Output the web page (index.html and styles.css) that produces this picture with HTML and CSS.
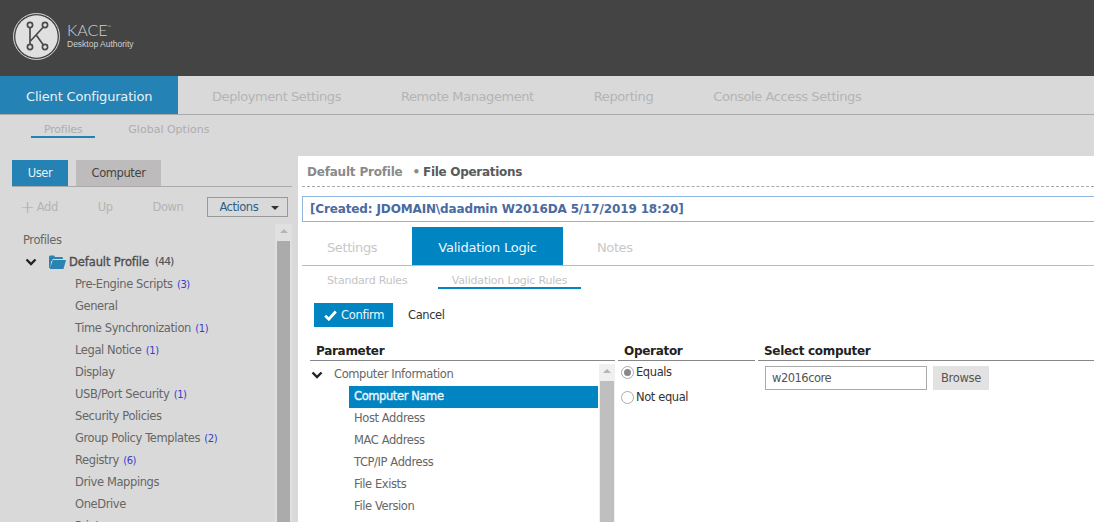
FILE: index.html
```html
<!DOCTYPE html>
<html lang="en">
<head>
<meta charset="utf-8">
<title>KACE Desktop Authority</title>
<link rel="stylesheet" href="styles.css">
</head>
<body>
<header class="masthead">
  <svg class="logo" width="48" height="48" viewBox="0 0 48 48">
    <circle cx="23.500" cy="23.500" r="23" fill="none" stroke="#d8d8d8" stroke-width="1"/>
    <circle cx="23.500" cy="23.500" r="21.200" fill="#e0e0e0"/>
    <g fill="none" stroke="#4a4a4a" stroke-width="1.700">
      <path d="M17 14.500v17M30.400 14 17 28.500M23 21.800 30.400 32"/>
      <circle cx="17" cy="12" r="2.600"/>
      <circle cx="32" cy="12" r="2.600"/>
      <circle cx="17" cy="34" r="2.600"/>
      <circle cx="32" cy="34" r="2.600"/>
    </g>
  </svg>
  <div class="brand">
    <div class="brand-name">KACE<sup class="tm">™</sup></div>
    <div class="brand-sub">Desktop Authority</div>
  </div>
</header>

<nav class="mainnav">
  <a class="mainnav-item is-active">Client Configuration</a>
  <a class="mainnav-item">Deployment Settings</a>
  <a class="mainnav-item">Remote Management</a>
  <a class="mainnav-item">Reporting</a>
  <a class="mainnav-item">Console Access Settings</a>
</nav>

<nav class="subnav">
  <a class="subnav-item is-active">Profiles</a>
  <a class="subnav-item">Global Options</a>
</nav>

<div class="workspace">
  <aside class="sidebar">
    <div class="scope-tabs">
      <a class="scope-tab is-active">User</a>
      <a class="scope-tab">Computer</a>
    </div>
    <div class="toolbar">
      <span class="tool tool-add"><span class="plus">+</span> Add</span>
      <span class="tool tool-up">Up</span>
      <span class="tool tool-down">Down</span>
      <span class="actions">Actions <i class="caret"></i></span>
    </div>
    <div class="tree-wrap">
      <div class="tree">
        <div class="tree-root">Profiles</div>
        <div class="tree-profile">
          <svg class="chev" width="12" height="8" viewBox="0 0 12 8"><path d="M1.500 1.500 6 6l4.500-4.500" fill="none" stroke="#222" stroke-width="2.400"/></svg>
          <svg class="folder" width="17" height="14" viewBox="0 0 17 14"><path d="M0 13V1.500L1 .5h4l1 1.500h7l1 1v1H4L2 7l-.5 6z" fill="#2a83b3"/><path d="M3.800 5H17L14.500 14H.8z" fill="#2a83b3"/></svg>
          <span class="profile-name">Default Profile</span><span class="count-dark">(44)</span>
        </div>
        <ul class="tree-items">
          <li>Pre-Engine Scripts <span class="count">(3)</span></li>
          <li>General</li>
          <li>Time Synchronization <span class="count">(1)</span></li>
          <li>Legal Notice <span class="count">(1)</span></li>
          <li>Display</li>
          <li>USB/Port Security <span class="count">(1)</span></li>
          <li>Security Policies</li>
          <li>Group Policy Templates <span class="count">(2)</span></li>
          <li>Registry <span class="count">(6)</span></li>
          <li>Drive Mappings</li>
          <li>OneDrive</li>
          <li>Printers</li>
        </ul>
      </div>
      <div class="scroll scroll-side"><i class="arrow"></i><i class="thumb"></i></div>
    </div>
  </aside>

  <main class="panel">
    <div class="crumbs"><span class="crumb-a">Default Profile</span><span class="crumb-dot">•</span><span class="crumb-b">File Operations</span></div>
    <div class="created">[Created: JDOMAIN\daadmin W2016DA 5/17/2019 18:20]</div>
    <div class="tabs">
      <a class="tab tab-settings">Settings</a>
      <a class="tab is-active">Validation Logic</a>
      <a class="tab tab-notes">Notes</a>
    </div>
    <div class="subtabs">
      <a class="subtab subtab-std">Standard Rules</a>
      <a class="subtab is-active">Validation Logic Rules</a>
    </div>
    <div class="actions-row">
      <button class="btn-confirm"><svg width="13" height="11" viewBox="0 0 13 11"><path d="M1.200 5.800 4.800 9.200 11.800 1.500" fill="none" stroke="#fff" stroke-width="2.800"/></svg>Confirm</button>
      <a class="btn-cancel">Cancel</a>
    </div>
    <div class="columns">
      <section class="col col-param">
        <h3 class="col-head">Parameter</h3>
        <div class="param-body">
          <div class="param-list">
            <div class="param-group">
              <svg class="chev" width="12" height="8" viewBox="0 0 12 8"><path d="M1.500 1.500 6 6l4.500-4.500" fill="none" stroke="#222" stroke-width="2.400"/></svg>
              <span>Computer Information</span>
            </div>
            <ul class="param-items">
              <li class="is-selected">Computer Name</li>
              <li>Host Address</li>
              <li>MAC Address</li>
              <li>TCP/IP Address</li>
              <li>File Exists</li>
              <li>File Version</li>
            </ul>
          </div>
          <div class="scroll scroll-param"><i class="arrow"></i><i class="thumb"></i></div>
        </div>
      </section>
      <section class="col col-op">
        <h3 class="col-head">Operator</h3>
        <div class="radio-row radio-first"><i class="radio is-on"></i>Equals</div>
        <div class="radio-row"><i class="radio"></i>Not equal</div>
      </section>
      <section class="col col-sel">
        <h3 class="col-head">Select computer</h3>
        <div class="sel-row">
          <div class="text-input">w2016core</div>
          <button class="btn-browse">Browse</button>
        </div>
      </section>
    </div>
  </main>
</div>
</body>
</html>
```

FILE: styles.css
```css
* { box-sizing: border-box; }
html, body { margin: 0; height: 522px; overflow: hidden; }
body {
  background: #d9d9d9;
  font-family: "DejaVu Sans", sans-serif;
  font-size: 12px;
  color: #555;
  width: 1094px;
  display: flex;
  flex-direction: column;
}
ul { list-style: none; margin: 0; padding: 0; }
h3 { margin: 0; }
button { font: inherit; border: 0; padding: 0; }

.masthead { height: 76px; flex: none; background: #444; display: flex; align-items: flex-start; padding: 13px 0 0 13px; }
.brand { margin-left: 6px; color: #d0d0d0; padding-top: 9px; }
.brand-name { font-family: "Lato", "Liberation Sans", sans-serif; font-weight: 300; font-size: 16px; line-height: 16px; }
.tm { font-size: 5px; vertical-align: 7px; line-height: 0; }
.brand-sub { font-family: "Liberation Sans", sans-serif; font-size: 8.500px; line-height: 11px; margin-top: 1px; }

.mainnav { height: 39px; flex: none; display: flex; border-bottom: 1px solid #aaa; }
.mainnav-item { font-size: 13px; line-height: 36px; padding-top: 3px; color: #b4b4b4; margin-right: 60px; white-space: nowrap; letter-spacing: -.42px; }
.mainnav-item.is-active { background: #2482b4; color: #e8f2f7; width: 178px; padding-left: 26px; margin-right: 34px; letter-spacing: -.18px; }

.subnav { height: 25px; flex: none; display: flex; padding-left: 31px; }
.subnav-item { height: 23px; font-size: 11px; line-height: 30px; color: #adadad; padding: 0 13px; letter-spacing: -.2px; }
.subnav-item.is-active { border-bottom: 2px solid #2482b4; margin-right: 31px; }
.subnav-item + .subnav-item { padding: 0 0 0 2px; letter-spacing: 0; }

.workspace { flex: 1; min-height: 0; display: flex; padding-top: 17px; }

.sidebar { width: 298px; flex: none; padding: 3px 6px 0 12px; display: flex; flex-direction: column; min-height: 0; }
.scope-tabs { display: flex; height: 27px; flex: none; border-bottom: 1px solid #aaa; gap: 8px; }
.scope-tab { height: 26px; line-height: 26px; text-align: center; background: #bdbbbb; color: #444; width: 85px; font-size: 11.500px; letter-spacing: -.4px; }
.scope-tab.is-active { background: #2482b4; color: #e8f2f7; width: 56px; }
.toolbar { height: 37px; flex: none; display: flex; align-items: center; color: #b4b4b4; font-size: 11.500px; letter-spacing: -.45px; padding: 3px 0 0 8px; }
.plus { font-size: 18px; line-height: 12px; font-weight: 300; vertical-align: -2px; color: #aaa; margin-right: -1px; }
.tool-up { margin-left: 40px; }
.tool-down { margin-left: 40px; }
.actions { margin-left: 24px; width: 81px; height: 20px; border: 1px solid #999; color: #2c5e86; line-height: 18px; padding-left: 11px; position: relative; }
.caret { position: absolute; right: 8px; top: 8px; border: 4px solid transparent; border-top-color: #333; border-bottom: 0; }

.tree-wrap { flex: 1; min-height: 0; display: flex; overflow: hidden; }
.tree { flex: 1; overflow: hidden; padding: 5px 0 0 11px; font-size: 11.500px; letter-spacing: -.4px; }
.tree-root { height: 22px; line-height: 22px; color: #666; }
.tree-profile { height: 22px; line-height: 22px; display: flex; align-items: center; white-space: pre; padding-left: 2px; }
.tree-profile .chev { margin-right: 12px; }
.tree-profile .folder { margin-right: 3px; }
.profile-name { color: #4d4d4d; font-size: 11.500px; -webkit-text-stroke: .35px #4d4d4d; letter-spacing: -.1px; }
.count-dark { font-size: 10px; color: #555; -webkit-text-stroke: .2px #555; margin-left: 6px; }
.tree-items { padding-left: 52px; }
.tree-items li { height: 22px; line-height: 22px; color: #666; white-space: nowrap; }
.count { color: #3a3ad0; font-size: 10px; margin-left: 1px; }

.scroll { flex: none; display: flex; flex-direction: column; align-items: center; }
.arrow { display: block; flex: none; height: 17px; position: relative; width: 100%; }
.arrow::after { content: ""; position: absolute; left: 50%; margin-left: -4px; top: 5px; border: 4px solid transparent; border-top: 0; border-bottom-color: #b5b5b5; }
.thumb { display: block; flex: 1; width: 100%; }
.scroll-side { width: 17px; margin-left: auto; background: #e0e0e0; padding: 0 2px; }
.scroll-side .thumb { background: #ababab; }

.panel { flex: 1; min-width: 0; background: #fff; padding: 0 0 0 4px; margin-top: -1px; overflow: hidden; }
.crumbs { height: 31px; border-bottom: 1px dashed #aaa; font-weight: 700; font-size: 12px; line-height: 29px; padding: 2px 0 0 5px; white-space: nowrap; letter-spacing: -.2px; }
.crumb-a { color: #8a8a8a; }
.crumb-dot { color: #8a8a8a; margin: 0 3px 0 10px; }
.crumb-b { color: #5a5a5a; letter-spacing: -.3px; }
.created { margin-top: 9px; height: 26px; border: 1px solid #8fb6e0; border-right: 0; color: #4a6aa0; font-weight: 700; font-size: 12px; line-height: 24px; padding-left: 7px; white-space: nowrap; letter-spacing: -.14px; }
.tabs { margin-top: 5px; height: 39px; display: flex; border-bottom: 1px solid #bbb; }
.tab { height: 38px; line-height: 36px; padding-top: 3px; font-size: 13px; color: #c8c8c8; letter-spacing: -.4px; }
.tab-settings { margin-left: 25px; width: 85px; }
.tab.is-active { background: #0084c2; color: #eef7fb; width: 151px; text-align: center; letter-spacing: -.25px; }
.tab-notes { margin-left: 34px; }
.subtabs { height: 24px; display: flex; }
.subtab { height: 23px; font-size: 11px; line-height: 30px; color: #c4c4c4; letter-spacing: -.2px; white-space: nowrap; }
.subtab-std { margin-left: 25px; width: 111px; }
.subtab.is-active { width: 143px; text-align: center; border-bottom: 2px solid #0084c2; }
.actions-row { height: 46px; padding: 13px 0 0 12px; display: flex; align-items: flex-start; }
.btn-confirm { height: 24px; width: 79px; background: #0084c2; color: #eef7fb; font-size: 11.500px; display: flex; align-items: center; padding-left: 10px; gap: 4px; letter-spacing: -.3px; }
.btn-cancel { margin-left: 15px; line-height: 24px; color: #333; font-size: 11.500px; letter-spacing: -.4px; }

.columns { display: flex; padding-left: 8px; margin-top: 6px; }
.col-head { height: 19px; font-size: 12px; line-height: 18px; color: #222; font-weight: 700; border-bottom: 1px solid #888; padding-left: 6px; letter-spacing: -.3px; }
.col-param { width: 305px; flex: none; }
.col-op { width: 137px; flex: none; margin-left: 3px; }
.col-sel { flex: 1; margin-left: 3px; }
.param-body { display: flex; height: 170px; margin-top: 3px; }
.param-list { flex: 1; font-size: 11.500px; letter-spacing: -.4px; color: #666; overflow: hidden; }
.param-group { height: 22px; display: flex; align-items: center; line-height: 20px; padding-left: 1px; }
.param-group .chev { margin-right: 11px; }
.param-group span { padding-bottom: 2px; }
.param-items { padding-left: 39px; margin-right: 1px; }
.param-items li { height: 22px; line-height: 20px; padding-left: 5px; }
.param-items li.is-selected { background: #0084c2; color: #eef7fb; -webkit-text-stroke: .35px #eef7fb; }
.scroll-param { width: 16px; background: #f0f0f0; padding: 0 1px; }
.scroll-param .thumb { background: #bfbfbf; }
.radio-row { display: flex; align-items: center; height: 18px; color: #333; font-size: 11.500px; letter-spacing: -.4px; margin-left: 3px; margin-top: 7px; }
.radio-first { margin-top: 2px; }
.radio { width: 13px; height: 13px; border: 1px solid #aaa; border-radius: 50%; margin-right: 2px; position: relative; background: #fff; }
.radio.is-on::after { content: ""; position: absolute; left: 2px; top: 2px; width: 7px; height: 7px; border-radius: 50%; background: #888; }
.sel-row { display: flex; gap: 6px; padding: 5px 0 0 7px; }
.text-input { width: 162px; height: 24px; border: 1px solid #aaa; line-height: 22px; padding-left: 6px; color: #555; font-size: 11.500px; letter-spacing: -.5px; }
.btn-browse { width: 56px; height: 24px; background: #e2e2e2; color: #555; font-size: 11.500px; letter-spacing: -.3px; }
```
